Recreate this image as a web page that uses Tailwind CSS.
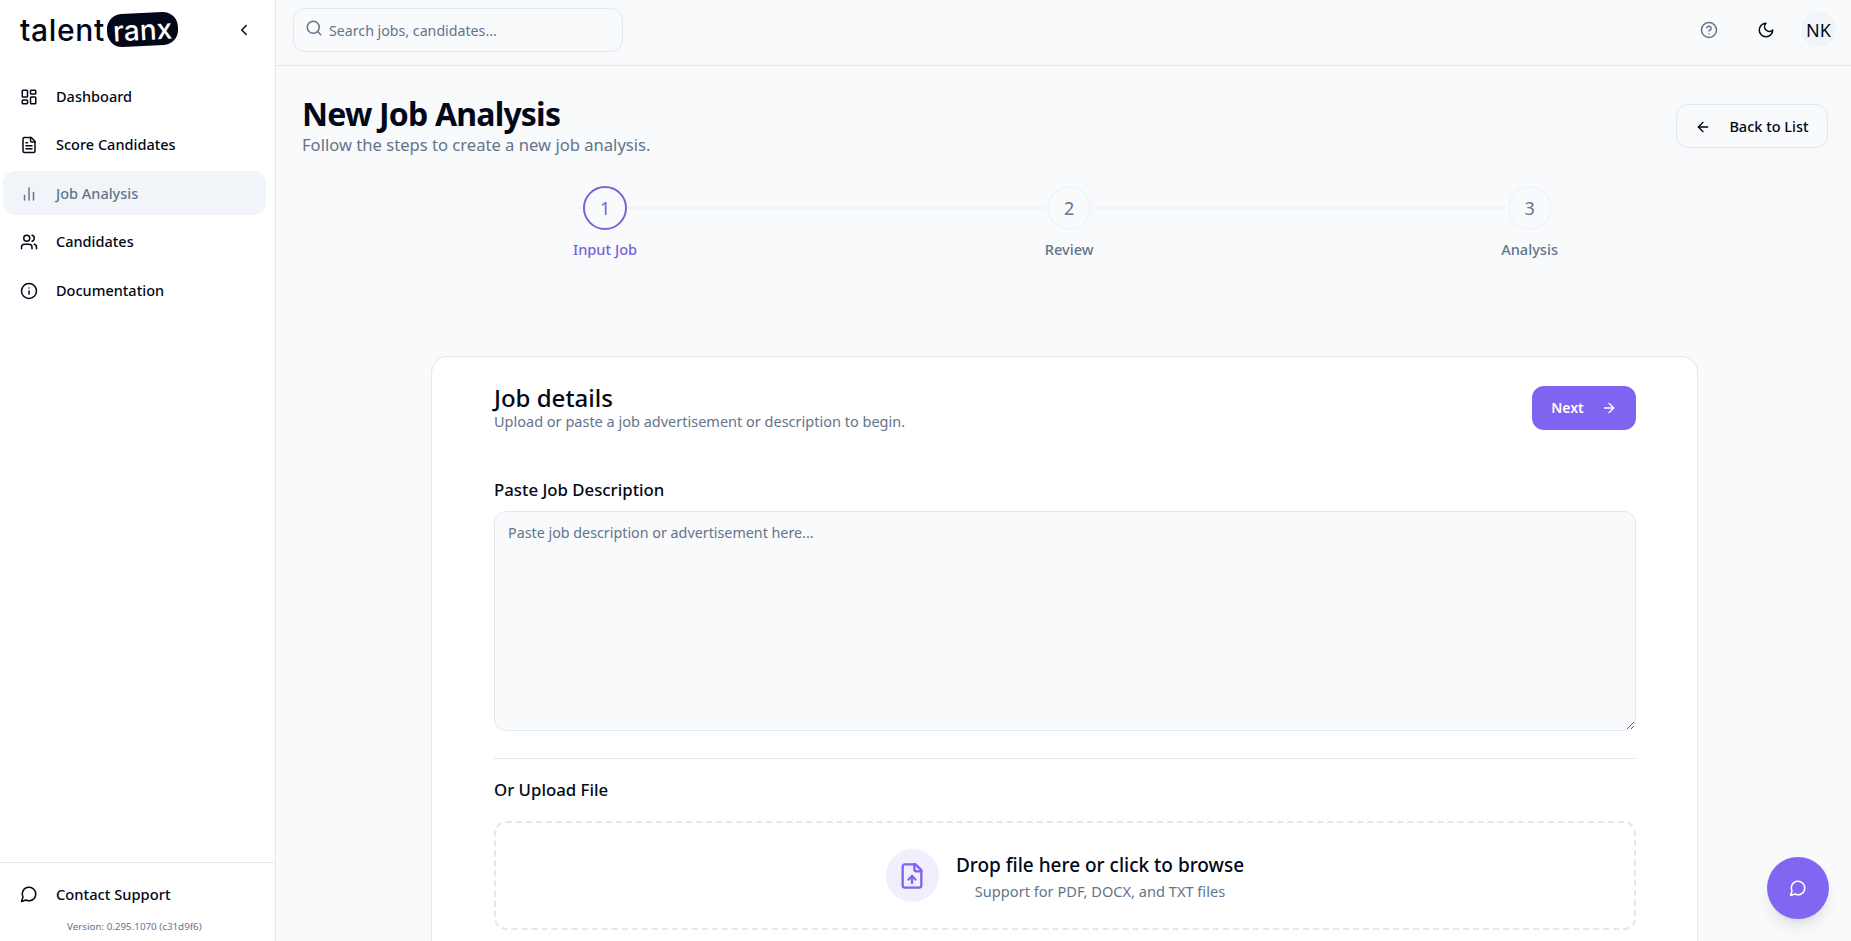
<!DOCTYPE html>
<html lang="en">

<head>
  <meta charset="UTF-8" />
  <meta name="viewport" content="width=device-width, initial-scale=1.0" />
  <title>New Job Analysis</title>
  <script src="https://cdn.jsdelivr.net/npm/@tailwindcss/browser@4"></script>
</head>

<body class="h-screen overflow-hidden flex bg-[#f8fafc] text-[#020817] font-['Noto_Sans',sans-serif]">

  <!-- SIDEBAR -->
  <aside class="w-[276px] shrink-0 h-full bg-white border-r border-[#e2e8f0] flex flex-col">
    <div class="h-[59px] pl-5 pr-[22px] flex items-center justify-between">
      <div class="flex items-center">
        <span class="font-['Inter',sans-serif] text-[30px] leading-none tracking-[0.7px] font-medium text-[#020817]">talent</span>
        <span class="ml-[2px] w-[71px] h-[33px] bg-[#020817] rounded-[15px] -rotate-3 flex items-center justify-center font-['Inter',sans-serif] text-[28px] leading-none font-medium text-white">ranx</span>
      </div>
      <svg class="w-[18px] h-[18px]" viewBox="0 0 24 24" fill="none" stroke="currentColor" stroke-width="2" stroke-linecap="round" stroke-linejoin="round"><path d="m15 18-6-6 6-6"/></svg>
    </div>

    <nav class="mt-[15px] pl-[3px] pr-[9px] flex flex-col gap-[4.5px] text-[14.5px] font-medium">
      <a class="h-[44px] pl-[17px] pt-[1px] flex items-center gap-[18px] rounded-xl">
        <svg class="w-[18px] h-[18px]" viewBox="0 0 24 24" fill="none" stroke="currentColor" stroke-width="2" stroke-linecap="round" stroke-linejoin="round"><rect x="3" y="3" width="7" height="9" rx="1"/><rect x="14" y="3" width="7" height="5" rx="1"/><rect x="14" y="12" width="7" height="9" rx="1"/><rect x="3" y="16" width="7" height="5" rx="1"/></svg>
        Dashboard
      </a>
      <a class="h-[44px] pl-[17px] pt-[1px] flex items-center gap-[18px] rounded-xl">
        <svg class="w-[18px] h-[18px]" viewBox="0 0 24 24" fill="none" stroke="currentColor" stroke-width="2" stroke-linecap="round" stroke-linejoin="round"><path d="M15 2H6a2 2 0 0 0-2 2v16a2 2 0 0 0 2 2h12a2 2 0 0 0 2-2V7Z"/><path d="M14 2v4a2 2 0 0 0 2 2h4"/><path d="M10 9H8"/><path d="M16 13H8"/><path d="M16 17H8"/></svg>
        Score Candidates
      </a>
      <a class="h-[44px] pl-[17px] pt-[1px] flex items-center gap-[18px] rounded-xl bg-[#f1f5f9] text-[#64748b]">
        <svg class="w-[18px] h-[18px]" viewBox="0 0 24 24" fill="none" stroke="currentColor" stroke-width="2" stroke-linecap="round" stroke-linejoin="round"><path d="M6 20v-6"/><path d="M12 20V4"/><path d="M18 20v-10"/></svg>
        Job Analysis
      </a>
      <a class="h-[44px] pl-[17px] flex items-center gap-[18px] rounded-xl">
        <svg class="w-[18px] h-[18px]" viewBox="0 0 24 24" fill="none" stroke="currentColor" stroke-width="2" stroke-linecap="round" stroke-linejoin="round"><path d="M16 21v-2a4 4 0 0 0-4-4H6a4 4 0 0 0-4 4v2"/><circle cx="9" cy="7" r="4"/><path d="M22 21v-2a4 4 0 0 0-3-3.87"/><path d="M16 3.13a4 4 0 0 1 0 7.75"/></svg>
        Candidates
      </a>
      <a class="h-[44px] pl-[17px] pt-[1px] flex items-center gap-[18px] rounded-xl">
        <svg class="w-[18px] h-[18px]" viewBox="0 0 24 24" fill="none" stroke="currentColor" stroke-width="2" stroke-linecap="round" stroke-linejoin="round"><circle cx="12" cy="12" r="10"/><path d="M12 16v-4"/><path d="M12 8h.01"/></svg>
        Documentation
      </a>
    </nav>

    <div class="mt-auto border-t border-[#e2e8f0] h-[79px]">
      <a class="mt-[9px] h-[44px] px-[20px] flex items-center gap-[18px] text-[14.7px] font-medium">
        <svg class="w-[18px] h-[18px]" viewBox="0 0 24 24" fill="none" stroke="currentColor" stroke-width="2" stroke-linecap="round" stroke-linejoin="round"><path d="M7.9 20A9 9 0 1 0 4 16.1L2 22Z"/></svg>
        Contact Support
      </a>
      <p class="pl-[67px] mt-[3px] text-[9.8px] leading-[16px] text-[#64748b]">Version: 0.295.1070 (c31d9f6)</p>
    </div>
  </aside>

  <div class="flex-1 min-w-0 h-full flex flex-col">

    <!-- TOP BAR -->
    <header class="h-[66px] shrink-0 border-b border-[#e2e8f0] pl-[17px] pr-[15px] pb-[6px] flex items-center justify-between">
      <div class="w-[330px] h-[44px] rounded-xl border border-[#e2e8f0] pl-[11px] flex items-center gap-[6px]">
        <svg class="w-[18px] h-[18px] text-[#64748b] -mt-[4px]" viewBox="0 0 24 24" fill="none" stroke="currentColor" stroke-width="2" stroke-linecap="round" stroke-linejoin="round"><circle cx="11" cy="11" r="8"/><path d="m21 21-4.3-4.3"/></svg>
        <input class="flex-1 min-w-0 mt-[2px] bg-transparent text-[14.2px] outline-none placeholder:text-[#64748b]" placeholder="Search jobs, candidates..." />
      </div>
      <div class="flex items-center">
        <svg class="w-[18px] h-[18px] text-[#64748b]" viewBox="0 0 24 24" fill="none" stroke="currentColor" stroke-width="2" stroke-linecap="round" stroke-linejoin="round"><circle cx="12" cy="12" r="10"/><path d="M9.09 9a3 3 0 0 1 5.83 1c0 2-3 3-3 3"/><path d="M12 17h.01"/></svg>
        <svg class="ml-[39px] w-[18px] h-[18px]" viewBox="0 0 24 24" fill="none" stroke="currentColor" stroke-width="2" stroke-linecap="round" stroke-linejoin="round"><path d="M12 3a6 6 0 0 0 9 9 9 9 0 1 1-9-9Z"/></svg>
        <div class="ml-[26px] w-[35px] h-[35px] rounded-full bg-[#f1f5f9] flex items-center justify-center text-lg">NK</div>
      </div>
    </header>

    <!-- MAIN -->
    <main class="flex-1 min-h-0 overflow-hidden">
      <div class="pl-[26px] pr-[23px] pt-[28px] flex items-start justify-between">
        <div>
          <h1 class="text-[32px] leading-[40px] font-bold tracking-[-0.8px]">New Job Analysis</h1>
          <p class="mt-[1px] text-[16.6px] leading-[20px] text-[#64748b]">Follow the steps to create a new job analysis.</p>
        </div>
        <button class="mt-[10px] w-[152px] h-[44px] pt-[1px] rounded-xl border border-[#e2e8f0] flex items-center justify-center gap-[18px] text-[14.5px] font-medium">
          <svg class="w-4 h-4" viewBox="0 0 24 24" fill="none" stroke="currentColor" stroke-width="2" stroke-linecap="round" stroke-linejoin="round"><path d="m12 19-7-7 7-7"/><path d="M19 12H5"/></svg>
          Back to List
        </button>
      </div>

      <!-- STEPPER -->
      <div class="relative w-[985px] ml-[297px] mt-[31px] flex justify-between">
        <div class="absolute left-0 right-[5px] top-[21px] h-[2px] bg-[#f1f5f9]"></div>
        <div class="relative flex flex-col items-center gap-[9px]">
          <div class="w-[44px] h-[44px] rounded-full border-2 border-[#7c62d8] bg-[#f8fafc] flex items-center justify-center text-lg text-[#7c62d8]">1</div>
          <span class="text-[14.6px] font-medium text-[#7c62d8]">Input Job</span>
        </div>
        <div class="relative flex flex-col items-center gap-[9px]">
          <div class="w-[44px] h-[44px] rounded-full border-2 border-[#f1f5f9] bg-[#f8fafc] flex items-center justify-center text-lg text-[#64748b]">2</div>
          <span class="text-[14.6px] font-medium text-[#64748b]">Review</span>
        </div>
        <div class="relative flex flex-col items-center gap-[9px]">
          <div class="w-[44px] h-[44px] rounded-full border-2 border-[#f1f5f9] bg-[#f8fafc] flex items-center justify-center text-lg text-[#64748b]">3</div>
          <span class="text-[14.6px] font-medium text-[#64748b]">Analysis</span>
        </div>
      </div>

      <!-- CARD -->
      <section class="ml-[155px] mt-[95px] w-[1267px] rounded-t-2xl bg-white border border-[#e2e8f0] pl-[62px] pr-[61px] pt-[29px] pb-10">
        <div class="h-[44px] flex items-start justify-between">
          <div class="-mt-[2px]">
            <h2 class="text-2xl leading-[28px] font-medium">Job details</h2>
            <p class="text-[14.5px] leading-[18px] text-[#64748b]">Upload or paste a job advertisement or description to begin.</p>
          </div>
          <button class="w-[104px] h-[44px] rounded-xl bg-[#8063f0] text-white flex items-center justify-center gap-[17px] text-sm font-semibold">
            Next
            <svg class="w-4 h-4" viewBox="0 0 24 24" fill="none" stroke="currentColor" stroke-width="2" stroke-linecap="round" stroke-linejoin="round"><path d="M5 12h14"/><path d="m12 5 7 7-7 7"/></svg>
          </button>
        </div>

        <label class="block mt-[48px] text-[16.8px] leading-[24px] font-medium">Paste Job Description</label>
        <textarea class="block mt-[9px] w-full h-[220px] rounded-xl border border-[#e2e8f0] bg-[#f8fafc] px-[13px] py-[11px] text-[14.3px] leading-[20px] outline-none placeholder:text-[#64748b]" placeholder="Paste job description or advertisement here..."></textarea>

        <div class="mt-[27px] h-px bg-[#e2e8f0]"></div>

        <label class="block mt-[19px] text-[16.8px] leading-[24px] font-medium">Or Upload File</label>
        <div class="mt-[19px] h-[109px] pt-[1px] rounded-xl border-2 border-dashed border-[#e2e8f0] flex items-center justify-center gap-[17px]">
          <div class="w-[53px] h-[53px] rounded-full bg-[#f1eefd] flex items-center justify-center text-[#8063f0]">
            <svg class="w-7 h-7" viewBox="0 0 24 24" fill="none" stroke="currentColor" stroke-width="2" stroke-linecap="round" stroke-linejoin="round"><path d="M15 2H6a2 2 0 0 0-2 2v16a2 2 0 0 0 2 2h12a2 2 0 0 0 2-2V7Z"/><path d="M14 2v4a2 2 0 0 0 2 2h4"/><path d="M12 12v6"/><path d="m15 15-3-3-3 3"/></svg>
          </div>
          <div class="text-center">
            <p class="text-[19px] leading-[30px] font-medium">Drop file here or click to browse</p>
            <p class="text-[14.6px] leading-[22px] text-[#64748b]">Support for PDF, DOCX, and TXT files</p>
          </div>
        </div>
      </section>
    </main>
  </div>

  <!-- CHAT BUTTON -->
  <button class="fixed right-[22px] bottom-[22px] w-[62px] h-[62px] rounded-full bg-[#8066f0] text-white shadow-lg flex items-center justify-center">
    <svg class="w-[18px] h-[18px]" viewBox="0 0 24 24" fill="none" stroke="currentColor" stroke-width="2" stroke-linecap="round" stroke-linejoin="round"><path d="M7.9 20A9 9 0 1 0 4 16.1L2 22Z"/></svg>
  </button>

</body>

</html>
